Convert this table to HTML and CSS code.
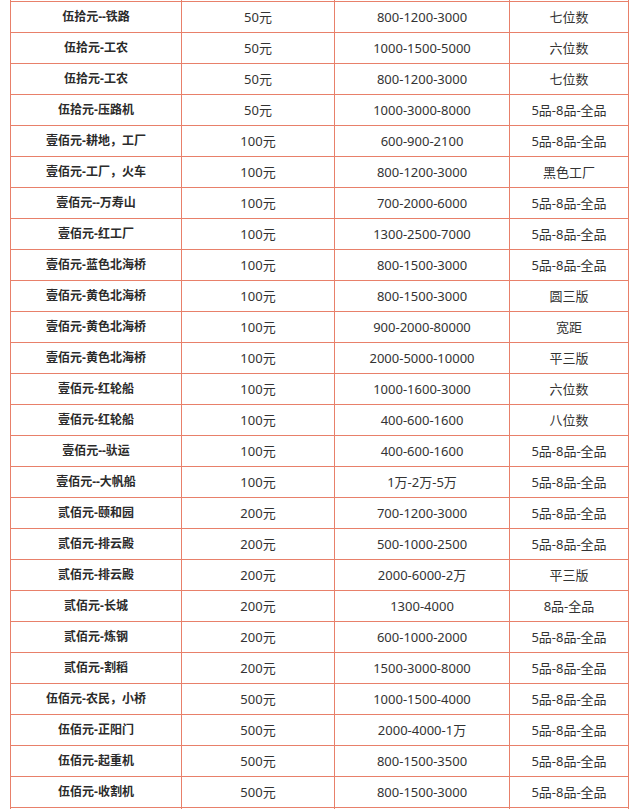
FILE: index.html
```html
<!DOCTYPE html>
<html lang="zh-CN">
<head>
<meta charset="utf-8">
<title>人民币价格表</title>
<link rel="stylesheet" href="styles.css">
</head>
<body>
<table class="price-table">
  <colgroup>
    <col class="c-name">
    <col class="c-face">
    <col class="c-price">
    <col class="c-note">
  </colgroup>
  <tbody>
    <tr class="spacer"><td></td><td></td><td></td><td></td></tr>
    <tr><td class="name">伍拾元--铁路</td><td>50元</td><td>800-1200-3000</td><td>七位数</td></tr>
    <tr><td class="name">伍拾元-工农</td><td>50元</td><td>1000-1500-5000</td><td>六位数</td></tr>
    <tr><td class="name">伍拾元-工农</td><td>50元</td><td>800-1200-3000</td><td>七位数</td></tr>
    <tr><td class="name">伍拾元-压路机</td><td>50元</td><td>1000-3000-8000</td><td>5品-8品-全品</td></tr>
    <tr><td class="name">壹佰元-耕地，工厂</td><td>100元</td><td>600-900-2100</td><td>5品-8品-全品</td></tr>
    <tr><td class="name">壹佰元-工厂，火车</td><td>100元</td><td>800-1200-3000</td><td>黑色工厂</td></tr>
    <tr><td class="name">壹佰元--万寿山</td><td>100元</td><td>700-2000-6000</td><td>5品-8品-全品</td></tr>
    <tr><td class="name">壹佰元-红工厂</td><td>100元</td><td>1300-2500-7000</td><td>5品-8品-全品</td></tr>
    <tr><td class="name">壹佰元-蓝色北海桥</td><td>100元</td><td>800-1500-3000</td><td>5品-8品-全品</td></tr>
    <tr><td class="name">壹佰元-黄色北海桥</td><td>100元</td><td>800-1500-3000</td><td>圆三版</td></tr>
    <tr><td class="name">壹佰元-黄色北海桥</td><td>100元</td><td>900-2000-80000</td><td>宽距</td></tr>
    <tr><td class="name">壹佰元-黄色北海桥</td><td>100元</td><td>2000-5000-10000</td><td>平三版</td></tr>
    <tr><td class="name">壹佰元-红轮船</td><td>100元</td><td>1000-1600-3000</td><td>六位数</td></tr>
    <tr><td class="name">壹佰元-红轮船</td><td>100元</td><td>400-600-1600</td><td>八位数</td></tr>
    <tr><td class="name">壹佰元--驮运</td><td>100元</td><td>400-600-1600</td><td>5品-8品-全品</td></tr>
    <tr><td class="name">壹佰元--大帆船</td><td>100元</td><td>1万-2万-5万</td><td>5品-8品-全品</td></tr>
    <tr><td class="name">贰佰元-颐和园</td><td>200元</td><td>700-1200-3000</td><td>5品-8品-全品</td></tr>
    <tr><td class="name">贰佰元-排云殿</td><td>200元</td><td>500-1000-2500</td><td>5品-8品-全品</td></tr>
    <tr><td class="name">贰佰元-排云殿</td><td>200元</td><td>2000-6000-2万</td><td>平三版</td></tr>
    <tr><td class="name">贰佰元-长城</td><td>200元</td><td>1300-4000</td><td>8品-全品</td></tr>
    <tr><td class="name">贰佰元-炼钢</td><td>200元</td><td>600-1000-2000</td><td>5品-8品-全品</td></tr>
    <tr><td class="name">贰佰元-割稻</td><td>200元</td><td>1500-3000-8000</td><td>5品-8品-全品</td></tr>
    <tr><td class="name">伍佰元-农民，小桥</td><td>500元</td><td>1000-1500-4000</td><td>5品-8品-全品</td></tr>
    <tr><td class="name">伍佰元-正阳门</td><td>500元</td><td>2000-4000-1万</td><td>5品-8品-全品</td></tr>
    <tr><td class="name">伍佰元-起重机</td><td>500元</td><td>800-1500-3500</td><td>5品-8品-全品</td></tr>
    <tr><td class="name">伍佰元-收割机</td><td>500元</td><td>800-1500-3000</td><td>5品-8品-全品</td></tr>
    <tr class="spacer"><td></td><td></td><td></td><td></td></tr>
  </tbody>
</table>
</body>
</html>
```
FILE: styles.css
```css
html, body {
  margin: 0;
  padding: 0;
  background: #ffffff;
  overflow: hidden;
}

body {
  font-family: "Noto Sans", "Noto Sans CJK SC", sans-serif;
  font-size: 13px;
  color: #333333;
}

.price-table {
  border-collapse: collapse;
  table-layout: fixed;
  width: 618px;
  margin: -30px 0 0 10px;
}

.c-name { width: 171px; }
.c-face { width: 153px; }
.c-price { width: 175px; }
.c-note { width: 119px; }

.price-table td {
  border: 1px solid #e8806a;
  height: 30px;
  padding: 0;
  text-align: center;
  vertical-align: middle;
  line-height: 18px;
  white-space: nowrap;
}

.price-table td.name {
  font-weight: bold;
  font-size: 12px;
  color: #2b2b2b;
}
```
